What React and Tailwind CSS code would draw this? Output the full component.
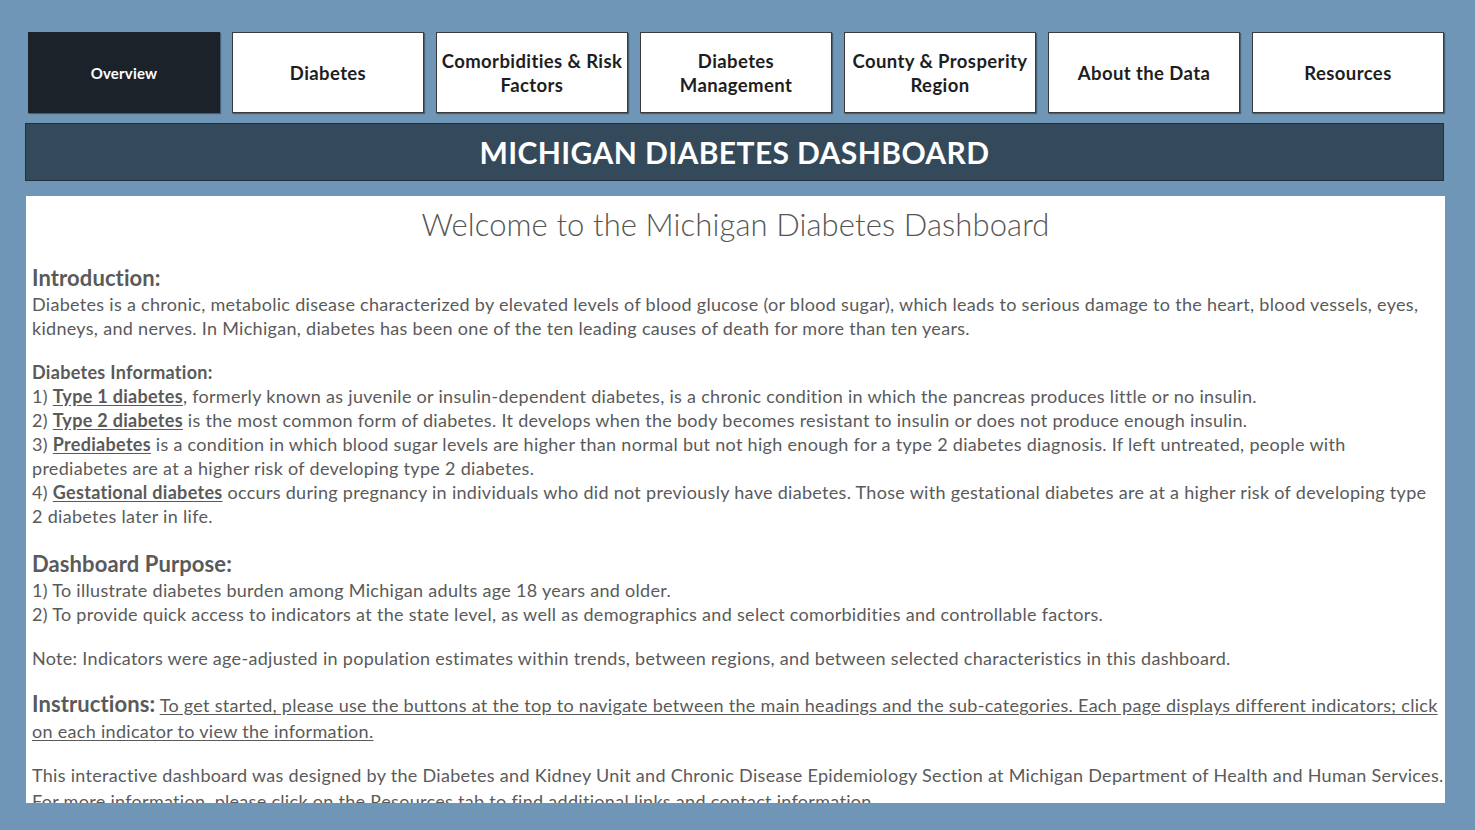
import React from "react";

const F = { fontFamily: "Lato, 'Noto Sans', sans-serif" };

function NavButton({ label, active }) {
  return (
    <div
      className={
        "w-[192px] h-[81px] flex items-center justify-center text-center leading-[24px] border shadow-[1px_1px_1px_rgba(0,0,0,0.35)] " +
        (active
          ? "bg-[#1b222a] border-[#1b222a] text-white text-[15px] font-bold tracking-[0.2px]"
          : "bg-white border-[#3a3a3a] text-[#1e1e1e] text-[18.5px] font-bold tracking-[0.4px]")
      }
    >
      <span>{label}</span>
    </div>
  );
}

function L({ children }) {
  return <div className="whitespace-nowrap">{children}</div>;
}

function B({ children }) {
  return <span className="font-bold underline underline-offset-2">{children}</span>;
}

export default function App() {
  return (
    <div style={F} className="w-[1475px] h-[830px] bg-[#6f96b6] overflow-hidden">
      <div className="pt-[32px] pl-[28px] flex gap-[12px]">
        <NavButton label="Overview" active />
        <NavButton label="Diabetes" />
        <NavButton label={<>Comorbidities &amp; Risk<br />Factors</>} />
        <NavButton label={<>Diabetes<br />Management</>} />
        <NavButton label={<>County &amp; Prosperity<br />Region</>} />
        <NavButton label="About the Data" />
        <NavButton label="Resources" />
      </div>
      <div className="ml-[25px] mt-[10px] w-[1419px] h-[58px] bg-[#344a5a] border border-[#22313c] flex items-center justify-center">
        <span className="text-white font-bold text-[30px] tracking-[0.4px]">MICHIGAN DIABETES DASHBOARD</span>
      </div>
      <div className="ml-[26px] mt-[15px] w-[1419px] h-[607px] bg-white overflow-hidden text-[#5a5a5a] px-[6px] tracking-[0.3px]">
        <div className="text-center text-[31px] font-light leading-[40px] pt-[8px] text-[#555] tracking-[0.1px]">
          Welcome to the Michigan Diabetes Dashboard
        </div>
        <div className="mt-[20px] text-[18px] leading-[24px]">
          <div className="text-[22px] font-bold leading-[28px] tracking-[0.1px]">Introduction:</div>
          <L>Diabetes is a chronic, metabolic disease characterized by elevated levels of blood glucose (or blood sugar), which leads to serious damage to the heart, blood vessels, eyes,</L>
          <L>kidneys, and nerves. In Michigan, diabetes has been one of the ten leading causes of death for more than ten years.</L>

          <div className="mt-[20px] font-bold">Diabetes Information:</div>
          <L>1) <B>Type 1 diabetes</B>, formerly known as juvenile or insulin-dependent diabetes, is a chronic condition in which the pancreas produces little or no insulin.</L>
          <L>2) <B>Type 2 diabetes</B> is the most common form of diabetes. It develops when the body becomes resistant to insulin or does not produce enough insulin.</L>
          <L>3) <B>Prediabetes</B> is a condition in which blood sugar levels are higher than normal but not high enough for a type 2 diabetes diagnosis. If left untreated, people with</L>
          <L>prediabetes are at a higher risk of developing type 2 diabetes.</L>
          <L>4) <B>Gestational diabetes</B> occurs during pregnancy in individuals who did not previously have diabetes. Those with gestational diabetes are at a higher risk of developing type</L>
          <L>2 diabetes later in life.</L>

          <div className="mt-[22px] text-[22px] font-bold leading-[28px] tracking-[0.1px]">Dashboard Purpose:</div>
          <L>1) To illustrate diabetes burden among Michigan adults age 18 years and older.</L>
          <L>2) To provide quick access to indicators at the state level, as well as demographics and select comorbidities and controllable factors.</L>

          <L><span className="block mt-[20px]">Note: Indicators were age-adjusted in population estimates within trends, between regions, and between selected characteristics in this dashboard.</span></L>

          <div className="mt-[20px] whitespace-nowrap leading-[28px]">
            <span className="text-[22px] font-bold tracking-[0.1px]">Instructions:</span>{" "}
            <span className="underline underline-offset-2">To get started, please use the buttons at the top to navigate between the main headings and the sub-categories. Each page displays different indicators; click</span>
          </div>
          <L><span className="underline underline-offset-2">on each indicator to view the information.</span></L>

          <L><span className="block mt-[20px]">This interactive dashboard was designed by the Diabetes and Kidney Unit and Chronic Disease Epidemiology Section at Michigan Department of Health and Human Services.</span></L>
          <L><span className="block mt-[2px]">For more information, please click on the Resources tab to find additional links and contact information.</span></L>
        </div>
      </div>
    </div>
  );
}
